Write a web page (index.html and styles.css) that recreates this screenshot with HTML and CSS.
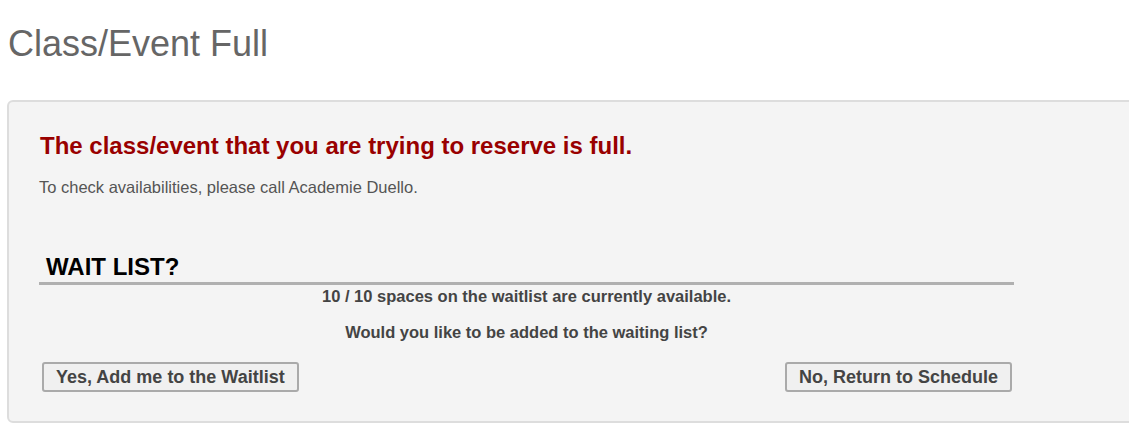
FILE: index.html
```html
<!DOCTYPE html>
<html>
<head>
<meta charset="utf-8">
<link rel="stylesheet" href="styles.css">
</head>
<body>
<div class="page">
  <h1 class="page-title">Class/Event Full</h1>
  <div class="panel">
    <h2 class="full-msg">The class/event that you are trying to reserve is full.</h2>
    <p class="note">To check availabilities, please call Academie Duello.</p>
    <div class="waitlist">
      <h3 class="wl-title">WAIT LIST?</h3>
      <p class="wl-info">10 / 10 spaces on the waitlist are currently available.</p>
      <p class="wl-question">Would you like to be added to the waiting list?</p>
      <div class="wl-actions">
        <button class="btn">Yes, Add me to the Waitlist</button>
        <button class="btn">No, Return to Schedule</button>
      </div>
    </div>
  </div>
</div>
</body>
</html>
```
FILE: styles.css
```css
html, body {
  margin: 0;
  padding: 0;
  background: #fff;
}
body {
  font-family: "Liberation Sans", Arial, sans-serif;
  overflow: hidden;
}
.page {
  padding: 0 0 0 7px;
}
.page-title {
  margin: 23px 0 36px 1px;
  font-size: 36px;
  font-weight: normal;
  line-height: 41px;
  color: #666;
}
.panel {
  width: 1150px;
  background: #f4f4f4;
  border: 2px solid #ddd;
  border-radius: 6px;
  padding: 30px 30px 29px 30px;
}
.full-msg {
  margin: 0 0 18px 1px;
  font-size: 24px;
  line-height: 28px;
  font-weight: bold;
  color: #990000;
}
.note {
  margin: 0;
  font-size: 16.5px;
  line-height: 19px;
  color: #555;
}
.waitlist {
  width: 975px;
  margin-top: 56px;
}
.wl-title {
  margin: 0;
  padding: 0 0 1px 7px;
  font-size: 24px;
  line-height: 28px;
  font-weight: bold;
  color: #000;
  border-bottom: 3px solid #b0b0b0;
}
.wl-info, .wl-question {
  margin: 0;
  text-align: center;
  font-size: 16.5px;
  line-height: 19px;
  font-weight: bold;
  color: #444;
}
.wl-info {
  margin-top: 2px;
}
.wl-question {
  margin-top: 17px;
}
.wl-actions {
  display: flex;
  justify-content: space-between;
  margin-top: 20px;
  padding: 0 2px 0 3px;
}
.btn {
  font-family: "Liberation Sans", Arial, sans-serif;
  font-size: 18px;
  font-weight: bold;
  color: #444;
  background: #f0f0f0;
  border: 2px solid #aaa;
  border-radius: 3px;
  height: 30px;
  padding: 0 12px;
}
```
